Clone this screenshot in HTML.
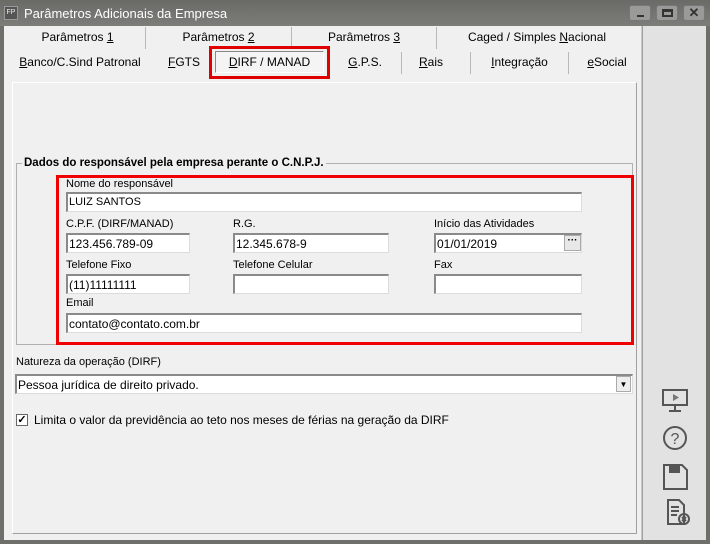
<!DOCTYPE html>
<html><head><meta charset="utf-8"><style>
*{box-sizing:border-box;margin:0;padding:0}
body{width:710px;height:544px;overflow:hidden;background:#f0f0f0;font-family:"Liberation Sans",sans-serif;font-size:12px;color:#000;position:relative}
.a{position:absolute}
.inp{position:absolute;background:#fff;border:1px solid #dcdcdc;border-top:2px solid #8a8a8a;border-left:2px solid #8a8a8a;height:20px;padding:2px 1px;font-size:12px;white-space:nowrap}
.lbl{position:absolute;font-size:11px}
.tab{position:absolute;font-size:12px;text-align:center}
.sep{position:absolute;width:1px;background:#b8b8b8}
u{text-decoration:underline}
</style></head><body>
<div class="a" style="left:0;top:0;width:710px;height:26px;background:linear-gradient(#6a6a66,#7c7c78)"></div>
<div class="a" style="left:4px;top:6px;width:14px;height:14px;background:#555;border:1px solid #999;color:#eee;font-size:7px;line-height:12px;text-align:center">FP</div>
<div class="a" style="left:24px;top:6px;color:#fff;font-size:13px">Parâmetros Adicionais da Empresa</div>
<div class="a" style="left:629px;top:5px;width:22px;height:16px;background:#9a9a98;border-radius:3px;border:1px solid #777"><div class="a" style="left:7px;top:9px;width:7px;height:2px;background:#333"></div></div>
<div class="a" style="left:656px;top:5px;width:22px;height:16px;background:#9a9a98;border-radius:3px;border:1px solid #777"><div class="a" style="left:5px;top:3px;width:11px;height:8px;border:2px solid #333;border-top-width:3px"></div></div>
<div class="a" style="left:683px;top:5px;width:22px;height:16px;background:#9a9a98;border-radius:3px;border:1px solid #777;color:#333;font-weight:bold;font-size:13px;line-height:14px;text-align:center">✕</div>
<div class="a" style="left:0;top:26px;width:4px;height:518px;background:#6e6e6a"></div>
<div class="a" style="left:706px;top:26px;width:4px;height:518px;background:#6e6e6a"></div>
<div class="a" style="left:0;top:540px;width:710px;height:4px;background:#6e6e6a"></div>
<div class="a" style="left:642px;top:26px;width:64px;height:514px;background:#e2e2e2;border-left:1px solid #a0a0a0"></div>
<div class="a" style="left:6px;top:26px;width:636px;height:514px;border-right:1px solid #c8c8c8"></div>
<div class="tab" style="left:10px;top:30px;width:135px">Parâmetros <u>1</u></div>
<div class="sep" style="left:145px;top:27px;height:22px"></div>
<div class="tab" style="left:146px;top:30px;width:145px">Parâmetros <u>2</u></div>
<div class="sep" style="left:291px;top:27px;height:22px"></div>
<div class="tab" style="left:292px;top:30px;width:144px">Parâmetros <u>3</u></div>
<div class="sep" style="left:436px;top:27px;height:22px"></div>
<div class="tab" style="left:437px;top:30px;width:200px">Caged / Simples <u>N</u>acional</div>
<div class="tab" style="left:10px;top:55px;width:140px"><u>B</u>anco/C.Sind Patronal</div>
<div class="tab" style="left:160px;top:55px;width:48px"><u>F</u>GTS</div>
<div class="a" style="left:209px;top:46px;width:121px;height:33px;border:3px solid #e00000"></div>
<div class="a" style="left:215px;top:51px;width:109px;height:22px;border:1px solid #888;border-right-color:#fff;border-bottom-color:#fff;background:#f4f4f4;text-align:center;line-height:20px"><u>D</u>IRF / MANAD</div>
<div class="tab" style="left:340px;top:55px;width:50px"><u>G</u>.P.S.</div>
<div class="sep" style="left:401px;top:52px;height:22px"></div>
<div class="tab" style="left:402px;top:55px;width:58px"><u>R</u>ais</div>
<div class="sep" style="left:470px;top:52px;height:22px"></div>
<div class="tab" style="left:471px;top:55px;width:97px"><u>I</u>ntegração</div>
<div class="sep" style="left:568px;top:52px;height:22px"></div>
<div class="tab" style="left:569px;top:55px;width:76px"><u>e</u>Social</div>
<div class="a" style="left:12px;top:82px;width:625px;height:452px;border:1px solid #fff;border-right-color:#a0a0a0;border-bottom-color:#a0a0a0"></div>
<div class="a" style="left:16px;top:163px;width:617px;height:182px;border:1px solid #b0b0b0"></div>
<div class="a" style="left:22px;top:157px;background:#f0f0f0;padding:0 2px;font-weight:bold;font-size:11.5px">Dados do responsável pela empresa perante o C.N.P.J.</div>
<div class="a" style="left:56px;top:175px;width:578px;height:170px;border:3px solid #f00000"></div>
<div class="lbl" style="left:66px;top:178px">Nome do responsável</div>
<div class="inp" style="left:66px;top:192px;width:516px;font-size:11px">LUIZ SANTOS</div>
<div class="lbl" style="left:66px;top:218px">C.P.F. (DIRF/MANAD)</div>
<div class="lbl" style="left:233px;top:218px">R.G.</div>
<div class="lbl" style="left:434px;top:218px">Início das Atividades</div>
<div class="inp" style="left:66px;top:233px;width:124px">123.456.789-09</div>
<div class="inp" style="left:233px;top:233px;width:156px">12.345.678-9</div>
<div class="inp" style="left:434px;top:233px;width:148px">01/01/2019</div>
<div class="a" style="left:564px;top:235px;width:17px;height:16px;background:#e8e8e8;border:1px solid #aaa;font-weight:bold;font-size:10px;line-height:10px;text-align:center">···</div>
<div class="lbl" style="left:66px;top:259px">Telefone Fixo</div>
<div class="lbl" style="left:233px;top:259px">Telefone Celular</div>
<div class="lbl" style="left:434px;top:259px">Fax</div>
<div class="inp" style="left:66px;top:274px;width:124px">(11)11111111</div>
<div class="inp" style="left:233px;top:274px;width:156px"></div>
<div class="inp" style="left:434px;top:274px;width:148px"></div>
<div class="lbl" style="left:66px;top:297px">Email</div>
<div class="inp" style="left:66px;top:313px;width:516px">contato@contato.com.br</div>
<div class="lbl" style="left:16px;top:356px">Natureza da operação (DIRF)</div>
<div class="inp" style="left:15px;top:374px;width:618px;height:20px">Pessoa jurídica de direito privado.</div>
<div class="a" style="left:616px;top:376px;width:15px;height:16px;background:#eee;border:1px solid #aaa;font-size:8px;text-align:center;line-height:15px">▼</div>
<div class="a" style="left:16px;top:414px;width:12px;height:12px;background:#fff;border:1px solid #666;font-size:11px;line-height:10px;text-align:center;font-weight:bold">✓</div>
<div class="a" style="left:34px;top:413px">Limita o valor da previdência ao teto nos meses de férias na geração da DIRF</div>
<svg class="a" style="left:660px;top:385px" width="32" height="150" viewBox="0 0 32 150">
<g fill="none" stroke="#555" stroke-width="2">
<rect x="3" y="5" width="24" height="15"/><path d="M15 20v5M9 26h12"/>
<circle cx="15" cy="53" r="11"/>
<path d="M4 80h18l5 5v19H4z"/>
<path d="M8 115h11l5 5v19H8z"/>
<path d="M11 122h8M11 126h8M11 130h6"/>
<circle cx="24" cy="134" r="5"/><path d="M22 132l4 4M26 132l-4 4"/>
</g>
<path d="M13 9l6 3.5-6 3.5z" fill="#777"/>
<text x="15" y="59" text-anchor="middle" font-size="16" fill="#555" font-family="Liberation Sans">?</text>
<rect x="9" y="80" width="11" height="8" fill="#555"/>
</svg>
</body></html>
